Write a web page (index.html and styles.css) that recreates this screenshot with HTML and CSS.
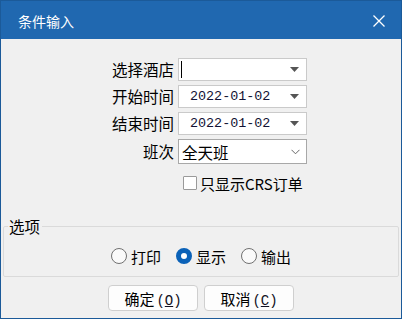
FILE: index.html
```html
<!DOCTYPE html>
<html lang="zh-CN">
<head>
    <meta charset="UTF-8">
    <title>条件输入</title>
    <link rel="stylesheet" href="styles.css">
</head>
<body>
    <div class="window">
        <header class="titlebar">
            <span class="title">条件输入</span>
            <svg class="close" width="12" height="12" viewBox="0 0 12 12">
                <path d="M0.5 0.5 L11.5 11.5 M11.5 0.5 L0.5 11.5" stroke="#fff" stroke-width="1.3" fill="none"/>
            </svg>
        </header>

        <main class="content">
            <div class="form">
                <label class="label">选择酒店</label>
                <div class="combo">
                    <span class="caret"></span>
                    <svg class="arrow" width="9" height="5" viewBox="0 0 9 5"><path d="M0 0 H9 L4.5 5 Z" fill="#555"/></svg>
                </div>

                <label class="label">开始时间</label>
                <div class="combo">
                    <span class="date">2022-01-02</span>
                    <svg class="arrow" width="9" height="5" viewBox="0 0 9 5"><path d="M0 0 H9 L4.5 5 Z" fill="#555"/></svg>
                </div>

                <label class="label">结束时间</label>
                <div class="combo">
                    <span class="date">2022-01-02</span>
                    <svg class="arrow" width="9" height="5" viewBox="0 0 9 5"><path d="M0 0 H9 L4.5 5 Z" fill="#555"/></svg>
                </div>

                <label class="label shift">班次</label>
                <div class="combo select">
                    <span class="value">全天班</span>
                    <svg class="chevron" width="9" height="6" viewBox="0 0 9 6"><path d="M0.5 0.8 L4.5 4.8 L8.5 0.8" stroke="#666" stroke-width="1" fill="none"/></svg>
                </div>

                <div class="check-row">
                    <span class="checkbox"></span>
                    <span>只显示CRS订单</span>
                </div>
            </div>

            <fieldset class="options">
                <legend>选项</legend>
                <div class="radios">
                    <div class="radio-item"><span class="radio"></span>打印</div>
                    <div class="radio-item"><span class="radio checked"></span>显示</div>
                    <div class="radio-item"><span class="radio"></span>输出</div>
                </div>
            </fieldset>

            <div class="buttons">
                <button class="btn">确定<span class="key">(<u>O</u>)</span></button>
                <button class="btn">取消<span class="key">(<u>C</u>)</span></button>
            </div>
        </main>
    </div>
</body>
</html>
```

FILE: styles.css
```css
body {
    margin: 0;
    font-family: "Noto Sans CJK SC", "Noto Sans", sans-serif;
    background-color: #f0f0f0;
}

.window {
    width: 402px;
    height: 319px;
    box-sizing: border-box;
    border: 1px solid #1b5a99;
    background-color: #f0f0f0;
}

.titlebar {
    height: 38px;
    background-color: #2068b0;
    display: flex;
    align-items: center;
    justify-content: space-between;
    padding: 0 16px 0 17px;
    color: #fff;
}

.title {
    font-size: 14px;
    margin-top: 2px;
}

.close {
    margin-top: 1px;
}

.form {
    display: grid;
    grid-template-columns: 64px 129px;
    grid-template-rows: 23px 23px 23px 25px auto;
    column-gap: 4px;
    row-gap: 4px;
    margin: 19px 0 0 109px;
}

.label {
    font-size: 15.5px;
    line-height: 23px;
    text-align: right;
    color: #000;
    white-space: nowrap;
}

.shift {
    line-height: 25px;
}

.combo {
    box-sizing: border-box;
    border: 1px solid #cacaca;
    background-color: #fff;
    display: flex;
    align-items: center;
    justify-content: space-between;
    padding: 0 7px 0 2px;
}

.combo.select {
    border-color: #a8a8a8;
}

.caret {
    width: 1px;
    height: 17px;
    background-color: #000;
}

.date {
    font-family: "Liberation Mono", monospace;
    font-size: 13.4px;
    color: #111133;
    padding-left: 9px;
}

.value {
    font-size: 15.5px;
    color: #000;
    padding-left: 1px;
}

.chevron {
    margin-right: -1px;
}

.check-row {
    grid-column: 2;
    display: flex;
    align-items: center;
    gap: 3px;
    height: 20px;
    margin-top: 5px;
    padding-left: 5px;
    font-size: 15px;
    color: #000;
}

.checkbox {
    width: 12px;
    height: 12px;
    border: 1px solid #9a9a9a;
    background-color: #fff;
    border-radius: 1px;
}

.options {
    margin: 24px 2px 0 2px;
    padding: 11px 4px 10px 4px;
    border: 1px solid #dadada;
    border-radius: 2px;
}

.options legend {
    padding: 0 2px 0 1px;
    font-size: 15.5px;
    line-height: 18px;
    color: #000;
}

.radios {
    display: flex;
    justify-content: center;
    gap: 15px;
    height: 20px;
}

.radio-item {
    display: flex;
    align-items: center;
    gap: 4px;
    font-size: 15px;
    color: #000;
}

.radio {
    box-sizing: border-box;
    width: 16px;
    height: 16px;
    border: 1px solid #707070;
    border-radius: 50%;
    background-color: #fafafa;
}

.radio.checked {
    border: 5px solid #0b62b8;
    background-color: #fff;
}

.buttons {
    display: flex;
    justify-content: center;
    gap: 6px;
    margin-top: 8px;
}

.btn {
    width: 90px;
    height: 26px;
    padding: 0;
    border: 1px solid #cfcfcf;
    border-radius: 4px;
    background-color: #fdfdfd;
    font-family: "Noto Sans CJK SC", "Noto Sans", sans-serif;
    font-size: 15px;
    color: #000;
}

.key {
    font-family: "Liberation Mono", monospace;
    font-size: 14px;
    color: #112;
    margin-left: 2px;
}
```
